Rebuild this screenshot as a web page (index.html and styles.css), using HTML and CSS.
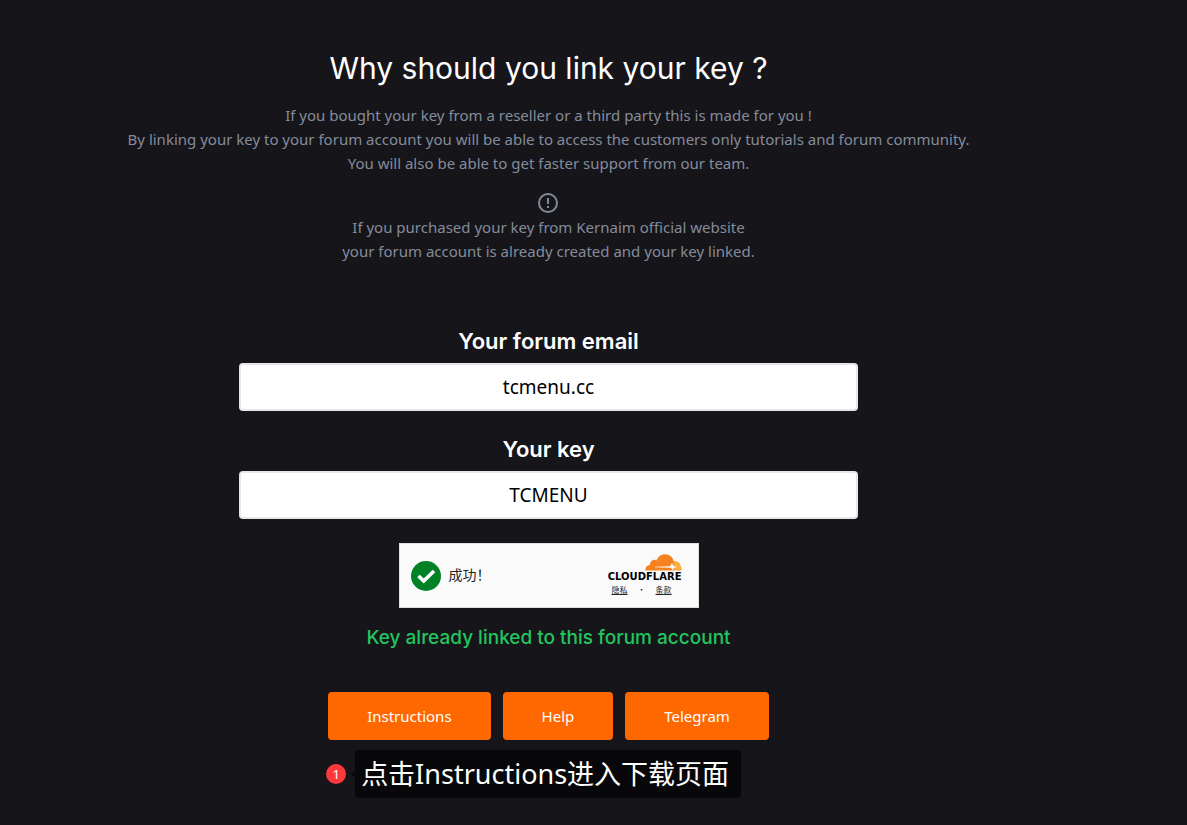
FILE: index.html
```html
<!DOCTYPE html>
<html lang="en">
<head>
    <meta charset="UTF-8">
    <meta name="viewport" content="width=device-width, initial-scale=1.0">
    <title>Link your key</title>
    <link rel="stylesheet" href="styles.css">
</head>
<body>
    <main class="page">
        <h1>Why should you link your key ?</h1>
        <p class="text">
            If you bought your key from a reseller or a third party this is made for you !<br>
            By linking your key to your forum account you will be able to access the customers only tutorials and forum community.<br>
            You will also be able to get faster support from our team.
        </p>
        <div class="text notice">
            <svg class="notice-icon" viewBox="0 0 24 24" width="24" height="24" fill="none" stroke="currentColor" stroke-width="2" aria-hidden="true">
                <circle cx="12" cy="12" r="9"/>
                <path d="M12 7v6M12 15v2"/>
            </svg>
            <p>
                If you purchased your key from Kernaim official website<br>
                your forum account is already created and your key linked.
            </p>
        </div>

        <form class="form">
            <label for="email">Your forum email</label>
            <input type="text" id="email" value="tcmenu.cc">

            <label for="key">Your key</label>
            <input type="text" id="key" value="TCMENU">

            <div class="captcha" lang="zh-CN">
                <svg class="captcha-check" viewBox="0 0 30 30" width="30" height="30" aria-hidden="true">
                    <circle cx="15" cy="15" r="15" fill="#038127"/>
                    <path d="M7.500 15l5.200 5L23 10" fill="none" stroke="#fff" stroke-width="3.600"/>
                </svg>
                <span class="captcha-text">成功！</span>
                <div class="brand">
                    <svg class="brand-cloud" viewBox="0 0 37 17" width="37" height="17" aria-hidden="true">
                        <path d="M26.500 16.500L28.500 7C32.500 6.500 35 8.500 35.500 11.500C36.600 12.800 36.900 15 36.500 16.500z" fill="#fbad41"/>
                        <path d="M.5 16.500C0 13.500 2 11.300 5 11C4.700 7.500 8.500 4.500 11.500 6.500C13 2.500 16 .2 20 .2C25.500.2 28.500 4 29 8.500L28 16.500z" fill="#f6821f"/>
                        <path d="M10 12.700L25 12.200L27 9L28.500 12L32 13L28.500 14L27.500 16.500L26 13.800L10 13.300z" fill="#fff"/>
                    </svg>
                    <span class="brand-name">CLOUDFLARE</span>
                    <div class="brand-links">
                        <a href="#privacy">隐私</a>
                        <span>•</span>
                        <a href="#terms">条款</a>
                    </div>
                </div>
            </div>
        </form>

        <p class="status">Key already linked to this forum account</p>

        <nav class="links">
            <a class="btn" href="#instructions">Instructions</a>
            <a class="btn" href="#help">Help</a>
            <a class="btn" href="#telegram">Telegram</a>
            <div class="callout" lang="zh-CN">
                <span class="callout-number">1</span>
                <span class="callout-text">点击Instructions进入下载页面</span>
            </div>
        </nav>
    </main>
</body>
</html>
```
FILE: styles.css
```css
* {
    box-sizing: border-box;
}
body {
    margin: 0;
    padding: 0 90px 0 0;
    background-color: #16151a;
    color: #fff;
    font-family: "Noto Sans", "Noto Sans CJK SC", sans-serif;
    font-size: 15px;
    line-height: 24px;
}
.page {
    display: flex;
    flex-direction: column;
    align-items: center;
    padding: 48px 16px 84px;
    text-align: center;
}
h1 {
    margin: 0 0 15px;
    font-family: Inter, sans-serif;
    font-size: 30px;
    font-weight: 400;
    line-height: 40px;
}
p {
    margin: 0;
}
.text {
    color: #848c9b;
}
.notice {
    margin-top: 16px;
}
.notice-icon {
    display: block;
    margin: 0 auto;
}
.form {
    display: flex;
    flex-direction: column;
    align-items: center;
    width: 100%;
    max-width: 619px;
    margin-top: 64px;
}
label {
    margin-bottom: 8px;
    font-family: Inter, sans-serif;
    font-size: 22px;
    font-weight: 600;
    line-height: 28px;
}
input {
    width: 100%;
    height: 48px;
    margin-bottom: 24px;
    padding: 0 16px;
    border: 2px solid #e5e7eb;
    border-radius: 4px;
    background-color: #fff;
    color: #000;
    font-family: "Noto Sans", sans-serif;
    font-size: 19px;
    text-align: center;
}
.captcha {
    display: flex;
    align-items: center;
    gap: 8px;
    width: 300px;
    height: 65px;
    padding: 0 16px 0 11px;
    border: 1px solid #e0e0e0;
    background-color: #fafafa;
    color: #232323;
}
.captcha-text {
    padding-bottom: 4px;
    font-family: "Noto Sans CJK SC", sans-serif;
    font-size: 14px;
    line-height: 20px;
}
.brand {
    display: flex;
    flex-direction: column;
    align-items: flex-end;
    margin-left: auto;
}
.brand-name {
    color: #000;
    font-family: "DejaVu Sans", sans-serif;
    font-size: 10px;
    font-weight: 700;
    line-height: 12px;
}
.brand-links {
    display: flex;
    gap: 10px;
    padding-right: 10px;
    font-family: "Noto Sans CJK SC", sans-serif;
    font-size: 8px;
    line-height: 14px;
}
.brand-links a {
    color: #232323;
}
.status {
    margin-top: 16px;
    color: #22c55e;
    font-family: Inter, sans-serif;
    font-size: 19px;
    font-weight: 500;
    line-height: 28px;
}
.links {
    position: relative;
    display: flex;
    gap: 12px;
    margin-top: 40px;
}
.btn {
    padding: 12px 39px;
    border-radius: 4px;
    background-color: #ff6700;
    color: #fff;
    text-decoration: none;
}
.callout {
    position: absolute;
    top: 58px;
    left: -2px;
    display: flex;
    align-items: center;
    gap: 9px;
    white-space: nowrap;
}
.callout-number {
    width: 20px;
    height: 20px;
    border-radius: 50%;
    background-color: #ff383c;
    font-size: 13px;
    line-height: 20px;
}
.callout-text {
    position: relative;
    padding: 0 12px 0 6px;
    border-radius: 3px;
    background-color: #08080a;
    font-size: 27px;
    line-height: 48px;
}
.callout-text::before {
    content: "";
    position: absolute;
    top: 20px;
    left: -4px;
    border: 4px solid transparent;
    border-left: 0;
    border-right-color: #08080a;
}
```
